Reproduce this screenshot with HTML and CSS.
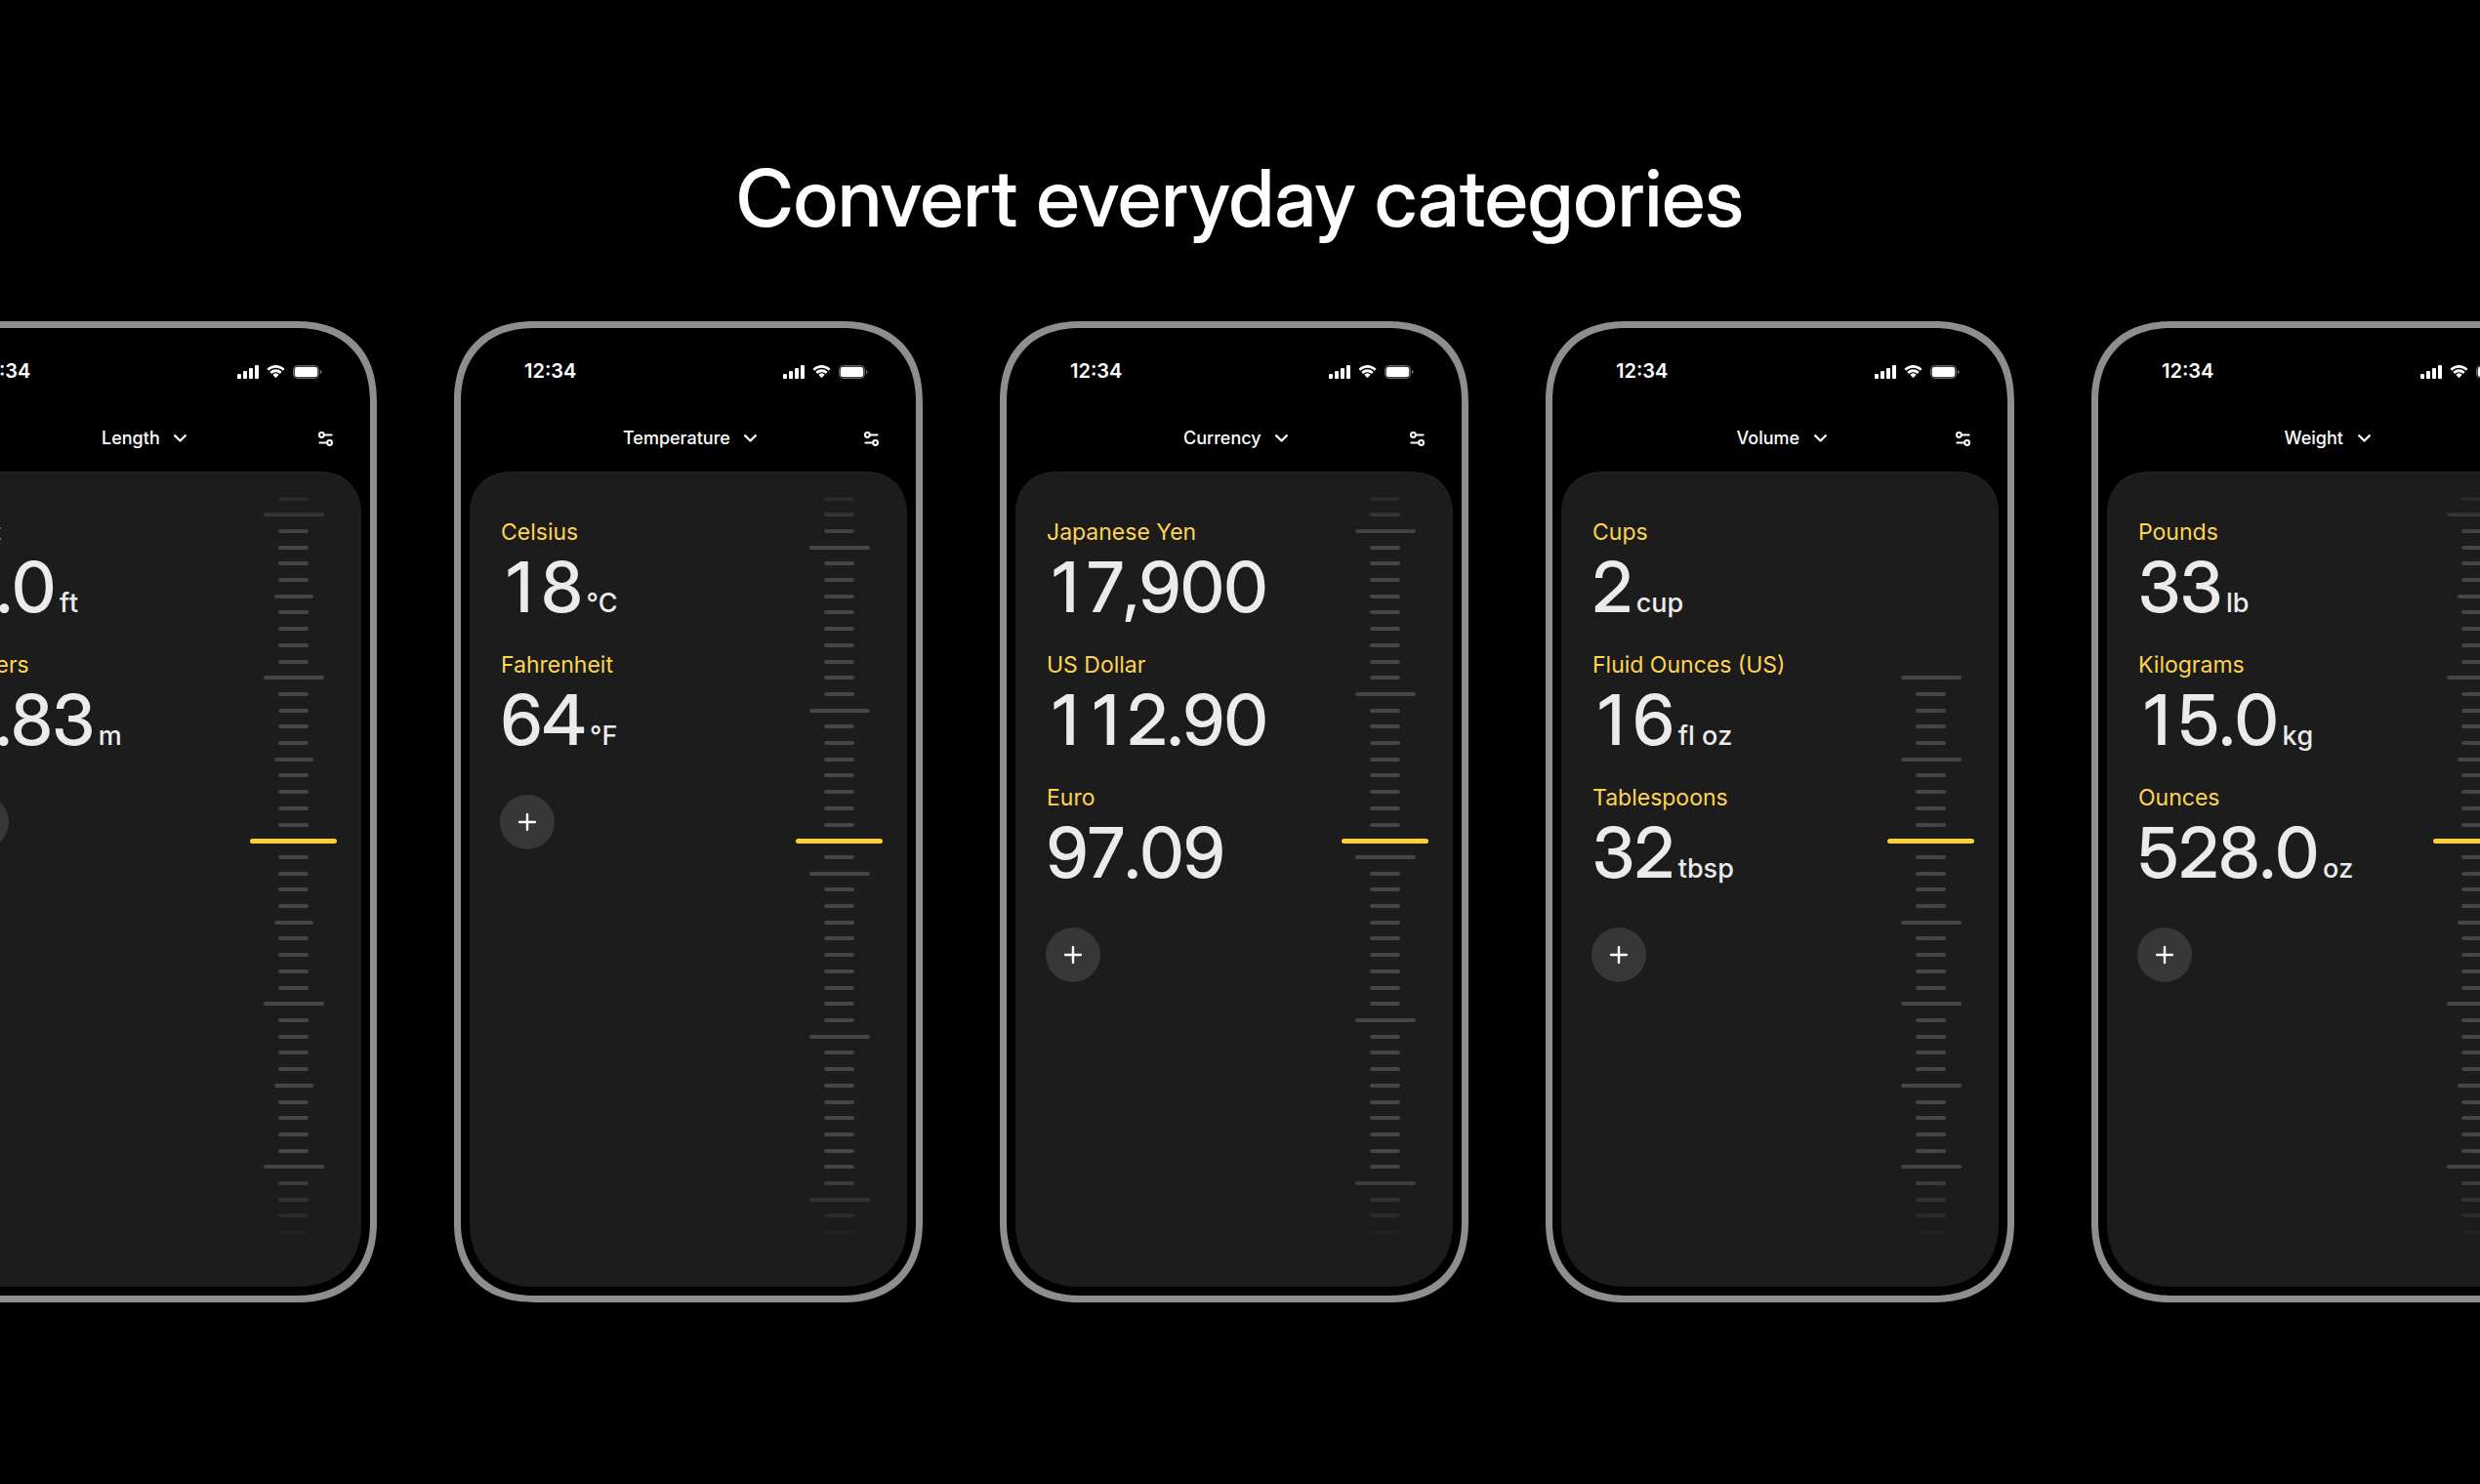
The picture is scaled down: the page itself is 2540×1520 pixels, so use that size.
FILE: index.html
```html
<!DOCTYPE html>
<html lang="en">
<head>
<meta charset="utf-8">
<meta name="viewport" content="width=device-width, initial-scale=1">
<title>Convert everyday categories</title>
<link rel="stylesheet" href="styles.css">
</head>
<body>
<svg class="sprite" aria-hidden="true">
  <symbol id="signal" viewBox="0 0 22 14">
    <rect x="0" y="9" width="4" height="5" rx="1"/><rect x="6" y="6" width="4" height="8" rx="1"/><rect x="12" y="3" width="4" height="11" rx="1"/><rect x="18" y="0" width="4" height="14" rx="1"/>
  </symbol>
  <symbol id="wifi" viewBox="0 0 19 14">
    <path d="M9.5 2.8c2.6 0 5 1 6.8 2.700.2.200.4.200.6 0l1.300-1.300c.2-.2.2-.5 0-.7C15.900 1.200 12.800 0 9.500 0S3.100 1.200.800 3.500c-.2.2-.2.5 0 .7l1.300 1.300c.2.200.4.200.6 0C4.500 3.800 6.900 2.800 9.500 2.800z"/>
    <path d="M9.500 7.200c1.400 0 2.800.5 3.800 1.500.2.200.5.200.7 0l1.300-1.400c.2-.2.2-.5 0-.7a8.400 8.400 0 0 0-11.600 0c-.2.200-.2.500 0 .7l1.300 1.400c.2.200.5.200.7 0 1-1 2.400-1.500 3.800-1.500z"/>
    <path d="M12.300 10.200c.2-.2.2-.5 0-.7a4.300 4.300 0 0 0-5.600 0c-.2.200-.2.500 0 .7l2.400 2.600c.2.200.5.200.7 0z"/>
  </symbol>
  <symbol id="battery" viewBox="0 0 30 14">
    <rect x=".5" y=".5" width="26" height="13" rx="4" fill="none" stroke="currentColor" stroke-opacity=".4"/>
    <path d="M28 5v4c1-.4 1.600-1.100 1.600-2S29 5.400 28 5z" opacity=".45"/>
    <rect x="1.700" y="1.700" width="23.600" height="10.600" rx="3"/>
  </symbol>
  <symbol id="chevron" viewBox="0 0 13 8">
    <path d="M1.200 1.200l5.300 5.300 5.300-5.300" fill="none" stroke="currentColor" stroke-width="2.300" stroke-linecap="round" stroke-linejoin="round"/>
  </symbol>
  <symbol id="sliders" viewBox="0 0 15 15">
    <g fill="none" stroke="currentColor" stroke-width="2" stroke-linecap="round"><circle cx="3.400" cy="3.500" r="2.400"/><path d="M6 3.500h7.600M1.400 11.500h7.600"/><circle cx="11.600" cy="11.500" r="2.400"/></g>
  </symbol>
  <symbol id="plus" viewBox="0 0 18 18">
    <path d="M9 1v16M1 9h16" fill="none" stroke="currentColor" stroke-width="2.400" stroke-linecap="round"/>
  </symbol>
</svg>

<main class="page">
  <h1 class="title">Convert everyday categories</h1>
  <div class="phones">

    <article class="phone">
      <div class="status"><time class="clock">12:34</time><div class="indicators"><svg class="i-signal"><use href="#signal"/></svg><svg class="i-wifi"><use href="#wifi"/></svg><svg class="i-battery"><use href="#battery"/></svg></div></div>
      <div class="nav">
        <div class="picker"><select class="category" aria-label="Category"><option>Length</option></select><svg class="i-chevron"><use href="#chevron"/></svg></div>
        <button class="settings" aria-label="Settings"><svg class="i-sliders"><use href="#sliders"/></svg></button>
      </div>
      <section class="panel">
        <div class="units">
          <dl class="list">
            <div class="unit"><dt class="name">Feet</dt><dd class="value"><span>6.0</span><span class="symbol">ft</span></dd></div>
            <div class="unit"><dt class="name">Meters</dt><dd class="value"><span><span class="one">1</span>.83</span><span class="symbol">m</span></dd></div>
          </dl>
          <button class="add" aria-label="Add unit"><svg class="i-plus"><use href="#plus"/></svg></button>
        </div>
        <div class="ruler" data-first="0" data-phase="1" data-major="10" data-half="5"></div>
      </section>
    </article>

    <article class="phone">
      <div class="status"><time class="clock">12:34</time><div class="indicators"><svg class="i-signal"><use href="#signal"/></svg><svg class="i-wifi"><use href="#wifi"/></svg><svg class="i-battery"><use href="#battery"/></svg></div></div>
      <div class="nav">
        <div class="picker"><select class="category" aria-label="Category"><option>Temperature</option></select><svg class="i-chevron"><use href="#chevron"/></svg></div>
        <button class="settings" aria-label="Settings"><svg class="i-sliders"><use href="#sliders"/></svg></button>
      </div>
      <section class="panel">
        <div class="units">
          <dl class="list">
            <div class="unit"><dt class="name">Celsius</dt><dd class="value"><span><span class="one">1</span>8</span><span class="symbol">°C</span></dd></div>
            <div class="unit"><dt class="name">Fahrenheit</dt><dd class="value"><span>64</span><span class="symbol">°F</span></dd></div>
          </dl>
          <button class="add" aria-label="Add unit"><svg class="i-plus"><use href="#plus"/></svg></button>
        </div>
        <div class="ruler" data-first="0" data-phase="3" data-major="10"></div>
      </section>
    </article>

    <article class="phone">
      <div class="status"><time class="clock">12:34</time><div class="indicators"><svg class="i-signal"><use href="#signal"/></svg><svg class="i-wifi"><use href="#wifi"/></svg><svg class="i-battery"><use href="#battery"/></svg></div></div>
      <div class="nav">
        <div class="picker"><select class="category" aria-label="Category"><option>Currency</option></select><svg class="i-chevron"><use href="#chevron"/></svg></div>
        <button class="settings" aria-label="Settings"><svg class="i-sliders"><use href="#sliders"/></svg></button>
      </div>
      <section class="panel">
        <div class="units">
          <dl class="list">
            <div class="unit"><dt class="name">Japanese Yen</dt><dd class="value"><span><span class="one">1</span>7,900</span></dd></div>
            <div class="unit"><dt class="name">US Dollar</dt><dd class="value"><span><span class="one">1</span><span class="one">1</span>2.90</span></dd></div>
            <div class="unit"><dt class="name">Euro</dt><dd class="value"><span>97.09</span></dd></div>
          </dl>
          <button class="add" aria-label="Add unit"><svg class="i-plus"><use href="#plus"/></svg></button>
        </div>
        <div class="ruler" data-first="0" data-phase="2" data-major="10"></div>
      </section>
    </article>

    <article class="phone">
      <div class="status"><time class="clock">12:34</time><div class="indicators"><svg class="i-signal"><use href="#signal"/></svg><svg class="i-wifi"><use href="#wifi"/></svg><svg class="i-battery"><use href="#battery"/></svg></div></div>
      <div class="nav">
        <div class="picker"><select class="category" aria-label="Category"><option>Volume</option></select><svg class="i-chevron"><use href="#chevron"/></svg></div>
        <button class="settings" aria-label="Settings"><svg class="i-sliders"><use href="#sliders"/></svg></button>
      </div>
      <section class="panel">
        <div class="units">
          <dl class="list">
            <div class="unit"><dt class="name">Cups</dt><dd class="value"><span>2</span><span class="symbol">cup</span></dd></div>
            <div class="unit"><dt class="name">Fluid Ounces (US)</dt><dd class="value"><span><span class="one">1</span>6</span><span class="symbol">fl oz</span></dd></div>
            <div class="unit"><dt class="name">Tablespoons</dt><dd class="value"><span>32</span><span class="symbol">tbsp</span></dd></div>
          </dl>
          <button class="add" aria-label="Add unit"><svg class="i-plus"><use href="#plus"/></svg></button>
        </div>
        <div class="ruler" data-first="11" data-phase="1" data-major="5"></div>
      </section>
    </article>

    <article class="phone">
      <div class="status"><time class="clock">12:34</time><div class="indicators"><svg class="i-signal"><use href="#signal"/></svg><svg class="i-wifi"><use href="#wifi"/></svg><svg class="i-battery"><use href="#battery"/></svg></div></div>
      <div class="nav">
        <div class="picker"><select class="category" aria-label="Category"><option>Weight</option></select><svg class="i-chevron"><use href="#chevron"/></svg></div>
        <button class="settings" aria-label="Settings"><svg class="i-sliders"><use href="#sliders"/></svg></button>
      </div>
      <section class="panel">
        <div class="units">
          <dl class="list">
            <div class="unit"><dt class="name">Pounds</dt><dd class="value"><span>33</span><span class="symbol">lb</span></dd></div>
            <div class="unit"><dt class="name">Kilograms</dt><dd class="value"><span><span class="one">1</span>5.0</span><span class="symbol">kg</span></dd></div>
            <div class="unit"><dt class="name">Ounces</dt><dd class="value"><span>528.0</span><span class="symbol">oz</span></dd></div>
          </dl>
          <button class="add" aria-label="Add unit"><svg class="i-plus"><use href="#plus"/></svg></button>
        </div>
        <div class="ruler" data-first="0" data-phase="1" data-major="10" data-half="5"></div>
      </section>
    </article>

  </div>
</main>
<script src="ruler.js"></script>
</body>
</html>
```
FILE: styles.css
```css
* { box-sizing: border-box; }

body {
  margin: 0;
  background: #000;
  color: #fff;
  font-family: Inter, "Liberation Sans", sans-serif;
}

svg { display: block; fill: currentColor; }
button { padding: 0; border: 0; background: none; color: inherit; font: inherit; cursor: pointer; }
.sprite { position: absolute; width: 0; height: 0; }

.page { padding: 155px 0 186px; overflow: hidden; }

.title {
  margin: 0 0 78px;
  font-family: "Inter Display", Inter, "Liberation Sans", sans-serif;
  font-size: 81px;
  line-height: 96px;
  font-weight: 500;
  text-align: center;
}

.phones {
  display: flex;
  justify-content: center;
  gap: 79px;
  padding-right: 12px;
}

.phone {
  display: flex;
  flex-direction: column;
  flex: 0 0 480px;
  padding: 32px 9px 9px;
  border: 7px solid #8e8e8e;
  border-radius: 76px;
}

.status {
  display: flex;
  justify-content: space-between;
  align-items: center;
  padding: 0 40px 0 56px;
}
.clock { font-size: 20px; line-height: 24px; font-weight: 600; }
.indicators { display: flex; gap: 8px; padding-top: 2px; }
.i-signal { width: 22px; height: 14px; }
.i-wifi { width: 19px; height: 14px; }
.i-battery { width: 30px; height: 14px; }

.nav {
  display: grid;
  grid-template-columns: 1fr auto 1fr;
  align-items: center;
  padding: 45px 29px 22px;
}
.picker { display: grid; grid-column: 2; align-items: center; margin-left: 3px; }
.category {
  grid-area: 1 / 1;
  appearance: none;
  margin: 0;
  padding: 0 27px 0 0;
  border: 0;
  background: none;
  color: inherit;
  font: 500 18px/24px Inter, "Liberation Sans", sans-serif;
}
.i-chevron { grid-area: 1 / 1; justify-self: end; width: 13px; height: 8px; pointer-events: none; }
.settings { justify-self: end; }
.i-sliders { width: 15px; height: 15px; }

.panel {
  display: flex;
  justify-content: space-between;
  padding: 0 25px 0 31px;
  border-radius: 40px 40px 60px 60px;
  background: #1c1c1c;
  box-shadow: inset 0 1px 0 #252525;
}
.units { padding-top: 46px; }
.list { display: grid; gap: 24px; margin: 0 0 37px; padding-left: 1px; }
.name { font-size: 23px; line-height: 32px; color: #ffd54f; }
.value {
  display: flex;
  align-items: baseline;
  gap: 4px;
  margin: 0;
  font-family: "Inter Display", Inter, "Liberation Sans", sans-serif;
  font-size: 71px;
  line-height: 80px;
  font-weight: 500;
  font-kerning: none;
  color: #ebebeb;
}
/* the narrow 1 takes the same room as the other figures */
.one { padding: 0 9px 0 6px; }
.symbol { font-family: Inter, "Liberation Sans", sans-serif; font-size: 27px; line-height: 32px; }
.add {
  display: grid;
  place-items: center;
  width: 56px;
  height: 56px;
  border-radius: 50%;
  background: #373737;
}
.i-plus { width: 18px; height: 18px; }

.ruler {
  display: flex;
  flex-direction: column;
  justify-content: space-between;
  align-items: center;
  width: 89px;
  height: 835px;
  padding: 25px 0 53px;
  mask-image: linear-gradient(transparent 8px, #000 67px, #000 calc(100% - 125px), transparent calc(100% - 46px));
}
.tick { display: grid; align-items: center; width: 31px; height: 5px; }
.tick::before { content: ""; height: 4px; border-radius: 2px; background: #454545; }
.tick.half { width: 40px; }
.tick.major { width: 62px; }
.tick.current { width: 89px; }
.tick.current::before { height: 5px; border-radius: 3px; background: #ffd033; }
.tick.blank { visibility: hidden; }

@supports (corner-shape: superellipse(1.2)) {
  .phone { border-radius: 83px; corner-shape: superellipse(1.2); }
  .panel { border-radius: 45px 45px 67px 67px; corner-shape: superellipse(1.2); }
}
```
FILE: ruler.js
```js
// Fills each ruler with ticks; the current value sits at a fixed position.
const TICKS = 46;
const CURRENT = 21;

for (const ruler of document.querySelectorAll(".ruler")) {
  const { first, phase, major, half } = ruler.dataset;
  for (let i = 0; i < TICKS; i++) {
    const tick = document.createElement("span");
    tick.className = "tick";
    const step = i - Number(phase);
    if (i < Number(first)) tick.classList.add("blank");
    else if (i === CURRENT) tick.classList.add("current");
    else if (step % Number(major) === 0) tick.classList.add("major");
    else if (half && step % Number(half) === 0) tick.classList.add("half");
    ruler.append(tick);
  }
}
```
